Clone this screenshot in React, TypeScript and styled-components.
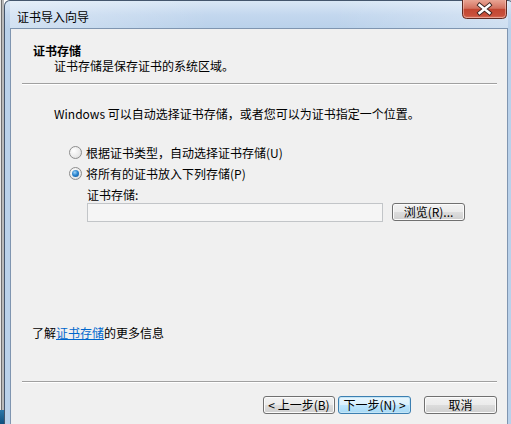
import React from 'react'
import styled, { createGlobalStyle } from 'styled-components'

const GlobalStyle = createGlobalStyle`
  html, body {
    margin: 0;
    padding: 0;
    background: #ffffff;
  }
  body {
    font-family: "Noto Sans CJK SC", "Noto Sans", sans-serif;
    font-size: 12px;
    color: #000;
  }
`

const Screen = styled.div`
  width: 511px;
  height: 424px;
  display: flex;
  overflow: hidden;
`

const BackStrip = styled.div`
  flex: 0 0 4px;
  background: linear-gradient(to right, #e6e6e6 0, #e6e6e6 1px, #6f6f6f 1px, #6f6f6f 2px, #b9b9b9 2px);
  position: relative;
  &::after {
    content: '';
    position: absolute;
    left: 0;
    right: 0;
    bottom: 0;
    height: 14px;
    background: linear-gradient(to bottom, #2a76a8, #0f4f7e);
  }
`

const Window = styled.div`
  flex: 0 0 510px;
  height: 440px;
  box-sizing: border-box;
  border: 1px solid #44566d;
  border-bottom: none;
  border-radius: 6px 6px 0 0;
  background: linear-gradient(to bottom, #d9e7f5 0, #c3d7ee 14px, #b9d1ea 28px, #b9d1ea 100%);
  padding: 0 5px;
  display: flex;
  flex-direction: column;
`

const TitleBar = styled.div`
  height: 27px;
  display: flex;
  align-items: flex-start;
  padding: 0 1px 0 7px;
  background: linear-gradient(to right, rgba(255,255,255,0.35) 0, rgba(255,255,255,0) 40%, rgba(255,255,255,0) 65%, rgba(255,255,255,0.3) 100%);
`

const Title = styled.div`
  flex: 1;
  line-height: 16px;
  padding-top: 8px;
  color: #000;
`

const CloseButton = styled.div`
  width: 45px;
  height: 19px;
  margin-top: -1px;
`

const Panel = styled.div`
  flex: 1;
  border: 1px solid #7f95b0;
  border-bottom: none;
  background: #f0f0f0;
  display: flex;
  flex-direction: column;
`

const Header = styled.div`
  padding: 14px 0 0 22px;
`

const HeaderTitle = styled.div`
  font-weight: 700;
  line-height: 15px;
`

const HeaderSub = styled.div`
  line-height: 15px;
  padding-left: 21px;
`

const Rule = styled.div<{ $top: number }>`
  height: 1px;
  margin: ${p => p.$top}px 10px 0 11px;
  background: #a0a0a0;
  box-shadow: 0 1px 0 #ffffff;
`

const Body = styled.div`
  padding-left: 43px;
`

const Instruction = styled.div`
  margin-top: 22px;
  line-height: 15px;
`

const Options = styled.div`
  margin-top: 21px;
  padding-left: 15px;
  display: flex;
  flex-direction: column;
`

const RadioRow = styled.label`
  height: 21px;
  display: flex;
  align-items: center;
  gap: 4px;
`

const RadioDot = styled.span<{ $on?: boolean }>`
  width: 11px;
  height: 11px;
  border-radius: 50%;
  border: 1px solid #8d8d8d;
  background: radial-gradient(circle at 35% 35%, #ffffff 0, #e9e9e9 60%, #d2d2d2 100%);
  position: relative;
  flex: 0 0 auto;
  &::after {
    content: '';
    display: ${p => (p.$on ? 'block' : 'none')};
    position: absolute;
    left: 2px;
    top: 2px;
    width: 7px;
    height: 7px;
    border-radius: 50%;
    background: radial-gradient(circle at 40% 35%, #9fd3f7 0, #2c86cf 45%, #0b4f96 100%);
  }
`

const StoreBlock = styled.div`
  padding-left: 18px;
  margin-top: 3px;
`

const FieldLabel = styled.div`
  line-height: 15px;
`

const FieldRow = styled.div`
  display: flex;
  align-items: flex-start;
  gap: 9px;
  margin-top: 1px;
`

const StoreInput = styled.div`
  width: 294px;
  height: 17px;
  border: 1px solid #c2c5c8;
  background: #f5f5f5;
`

const Button = styled.div<{ $w?: number; $focus?: boolean }>`
  box-sizing: border-box;
  width: ${p => p.$w ?? 73}px;
  height: 18px;
  border: 1px solid ${p => (p.$focus ? '#3c7fb1' : '#707070')};
  border-radius: 3px;
  box-shadow: inset 0 0 0 1px ${p => (p.$focus ? '#c4e5f6' : '#fbfbfb')};
  background: ${p =>
    p.$focus
      ? 'linear-gradient(to bottom, #eaf6fd 0, #d9f0fc 50%, #bee6fd 50%, #a7d9f5 100%)'
      : 'linear-gradient(to bottom, #f2f2f2 0, #ebebeb 50%, #dddddd 50%, #cfcfcf 100%)'};
  display: flex;
  align-items: center;
  justify-content: center;
  line-height: 14px;
  white-space: nowrap;
`

const MoreInfo = styled.div`
  margin-top: 103px;
  padding-left: 21px;
  line-height: 15px;
`

const Link = styled.a`
  color: #0066cc;
  text-decoration: underline;
`

const Footer = styled.div`
  margin-top: 14px;
  padding-right: 10px;
  display: flex;
  justify-content: flex-end;
`

const ButtonPair = styled.div`
  display: flex;
  gap: 3px;
  margin-right: 13px;
`

const CloseGlyph: React.FC = () => (
  <svg width="45" height="19" viewBox="0 0 45 19">
    <defs>
      <linearGradient id="closeBg" x1="0" y1="0" x2="0" y2="1">
        <stop offset="0" stopColor="#e9a594" />
        <stop offset="0.45" stopColor="#d3715f" />
        <stop offset="0.5" stopColor="#c24631" />
        <stop offset="0.85" stopColor="#c9513c" />
        <stop offset="1" stopColor="#e0836e" />
      </linearGradient>
    </defs>
    <path d="M0.5 0 V14.5 Q0.5 18.5 4.5 18.5 H40.5 Q44.5 18.5 44.5 14.5 V0" fill="url(#closeBg)" stroke="#5e2a22" />
    <path d="M1.5 0 V14.3 Q1.5 17.5 4.6 17.5 H40.4 Q43.5 17.5 43.5 14.3 V0" fill="none" stroke="rgba(255,220,210,0.45)" />
    <path d="M17.5 5 L27.5 13 M27.5 5 L17.5 13" stroke="#3b2420" strokeWidth="4.2" strokeLinecap="square" />
    <path d="M17.5 5 L27.5 13 M27.5 5 L17.5 13" stroke="#ffffff" strokeWidth="2.4" strokeLinecap="square" />
  </svg>
)

const App: React.FC = () => {
  return (
    <>
      <GlobalStyle />
      <Screen>
        <BackStrip />
        <Window>
          <TitleBar>
            <Title>证书导入向导</Title>
            <CloseButton>
              <CloseGlyph />
            </CloseButton>
          </TitleBar>

          <Panel>
            <Header>
              <HeaderTitle>证书存储</HeaderTitle>
              <HeaderSub>证书存储是保存证书的系统区域。</HeaderSub>
            </Header>
            <Rule $top={10} />

            <Body>
              <Instruction>Windows 可以自动选择证书存储，或者您可以为证书指定一个位置。</Instruction>
              <Options>
                <RadioRow>
                  <RadioDot />
                  <span>根据证书类型，自动选择证书存储(U)</span>
                </RadioRow>
                <RadioRow>
                  <RadioDot $on />
                  <span>将所有的证书放入下列存储(P)</span>
                </RadioRow>
                <StoreBlock>
                  <FieldLabel>证书存储:</FieldLabel>
                  <FieldRow>
                    <StoreInput />
                    <Button $w={73}>浏览(R)...</Button>
                  </FieldRow>
                </StoreBlock>
              </Options>
            </Body>

            <MoreInfo>
              了解<Link>证书存储</Link>的更多信息
            </MoreInfo>
            <Rule $top={41} />

            <Footer>
              <ButtonPair>
                <Button $w={72}>&lt; 上一步(B)</Button>
                <Button $w={73} $focus>下一步(N) &gt;</Button>
              </ButtonPair>
              <Button $w={73}>取消</Button>
            </Footer>
          </Panel>
        </Window>
      </Screen>
    </>
  )
}

export default App
